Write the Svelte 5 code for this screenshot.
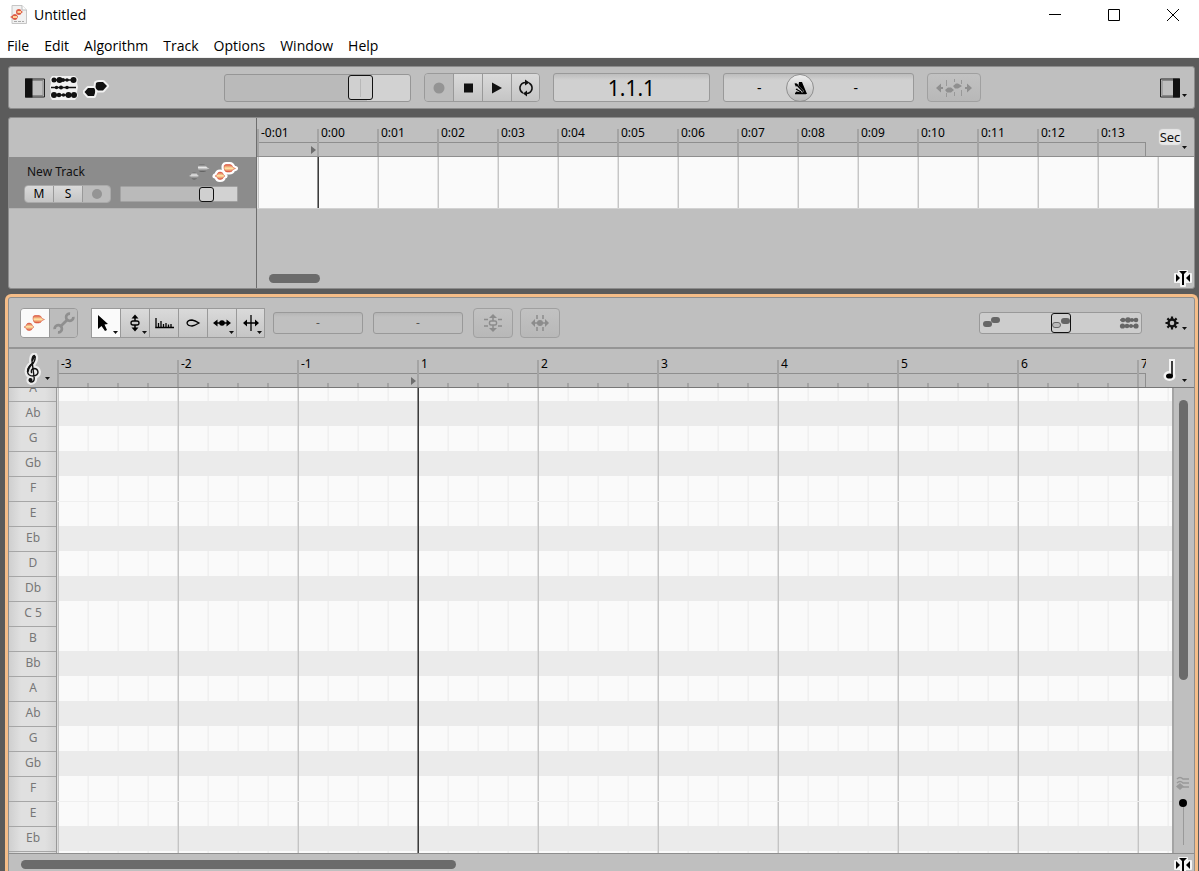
<script>
  const menus = ['File', 'Edit', 'Algorithm', 'Track', 'Options', 'Window', 'Help'];
  const seconds = ['-0:01', '0:00', '0:01', '0:02', '0:03', '0:04', '0:05', '0:06', '0:07', '0:08', '0:09', '0:10', '0:11', '0:12', '0:13'];
  const bars = ['-3', '-2', '-1', '1', '2', '3', '4', '5', '6', '7'];
  const keys = ['A', 'Ab', 'G', 'Gb', 'F', 'E', 'Eb', 'D', 'Db', 'C 5', 'B', 'Bb', 'A', 'Ab', 'G', 'Gb', 'F', 'E', 'Eb', ''];
  let volume = $state(77);
  let trackVolume = $state(77);
  let blobView = $state(50);
  let blobHeight = $state(100);
</script>

{#snippet blobShape()}
  <path d="M1 15 3 14Q3.500 11 6 11Q9 11 9.500 14L11 15 9.500 16Q9 18.500 6 18.500Q3.500 18.500 3 16Z" />
  <path d="M10 7Q9.500 3.500 12 3.500H16Q18 3.500 19 6.500L21.500 7.500 19 8.500Q18 11 15.500 11H13Q10.500 11 10 7Z" />
{/snippet}

{#snippet blobs(cls)}
  <svg class="blobs {cls}" width="24" height="22" viewBox="0 0 24 22" aria-hidden="true">
    <g class="halo">{@render blobShape()}</g>
    <g class="shape">{@render blobShape()}</g>
  </svg>
{/snippet}

{#snippet fit()}
  <svg width="18" height="18" viewBox="0 0 18 18" aria-hidden="true">
    <path d="M5 2H13V5H17V13H11V17H7V13H1V5H5Z" fill="#f4f4f4" stroke="#f4f4f4" stroke-width="2" stroke-linejoin="round" />
    <path d="M5 2H13L10 5V16H8V5ZM2 5 6 9 2 13ZM16 5V13L12 9Z" fill="#000" />
  </svg>
{/snippet}

{#snippet caret()}
  <svg class="caret" width="6" height="4" viewBox="0 0 6 4" aria-hidden="true"><path d="M0 0H5L2.500 3Z" fill="#111" /></svg>
{/snippet}

<div class="window">
  <header class="titlebar">
    <svg width="20" height="20" viewBox="0 0 20 20" aria-hidden="true">
      <defs>
        <linearGradient id="warm" x1="0" y1="0" x2="0" y2="1">
          <stop offset="0" stop-color="#dd5540" /><stop offset=".5" stop-color="#ffeaa8" /><stop offset="1" stop-color="#dd5540" />
        </linearGradient>
        <linearGradient id="cool" x1="0" y1="0" x2="0" y2="1">
          <stop offset="0" stop-color="#666" /><stop offset=".4" stop-color="#e6e6e6" /><stop offset="1" stop-color="#555" />
        </linearGradient>
      </defs>
      <path d="M3 .5H13L17.500 5V18.500H3Z" fill="#f1f1f1" stroke="#c6c6c6" />
      <path d="M13 .5V5H17.500" fill="#fff" stroke="#bbb" />
      <path d="M1 12 3 11Q4 9 6 9Q8 9 9 11.500Q8 15 6 15Q4 15 3 13Z" fill="#dd5b45" />
      <path d="M7 7Q7 4 10 4Q12 4 12.500 6L14 7 12.500 8Q12 10 10 10Q7 10 7 7Z" fill="#dd5b45" />
      <path d="M4 12H8M8.500 7H12" stroke="#ffd29b" stroke-width="2" />
      <path d="M5 16.500H15" stroke="#aaa" stroke-dasharray="3 1" />
    </svg>
    <span class="title">Untitled</span>
    <div class="winbtns">
      <button aria-label="Minimize"><svg width="14" height="14" viewBox="0 0 14 14"><path d="M1 6.500H13" stroke="#000" /></svg></button>
      <button aria-label="Maximize"><svg width="14" height="14" viewBox="0 0 14 14"><path d="M1.500 1.500H12.500V12.500H1.500Z" fill="none" stroke="#000" /></svg></button>
      <button aria-label="Close"><svg width="14" height="14" viewBox="0 0 14 14"><path d="M1 1 13 13M13 1 1 13" stroke="#000" /></svg></button>
    </div>
  </header>
  <nav class="menubar">
    {#each menus as m}<button>{m}</button>{/each}
  </nav>

  <section class="panel transport">
    <div class="side">
      <button aria-label="Info pane"><svg width="20" height="20" viewBox="0 0 20 20"><path d="M.5 1H19.500V19H.5Z" fill="#bfbfbf" stroke="#222" /><path d="M2 2.500H18V17.500H2Z" fill="none" stroke="#888" /><path d="M0 .5H7.500V19.500H0Z" fill="#111" /></svg></button>
      <button aria-label="Tracks">
        <svg width="30" height="28" viewBox="0 0 30 28">
          <path d="M3 2H26L29 5 28 9 29 13 28 18 29 22 26 26H3L1 22 2 18 1 13 2 9 1 5Z" fill="#f2f2f2" />
          <path d="M3 6H27M2 13.500H27M3 21H27" stroke="#111" stroke-width="1.500" />
          <g fill="#111">
            <circle cx="5" cy="6" r="2.500" /><circle cx="10.500" cy="6" r="3" /><circle cx="14" cy="6" r="2" /><circle cx="18" cy="6" r="1.800" /><circle cx="24.500" cy="6" r="3" />
            <circle cx="7.500" cy="13.500" r="1.700" /><circle cx="12" cy="13.500" r="2" /><circle cx="18" cy="13.500" r="1.800" />
            <circle cx="5" cy="21" r="3" /><circle cx="10" cy="21" r="2.300" /><circle cx="14.500" cy="21" r="1.800" /><circle cx="19.500" cy="21" r="3" /><circle cx="25" cy="21" r="3" />
          </g>
        </svg>
      </button>
      <button aria-label="Notes">
        <svg width="28" height="24" viewBox="0 0 28 24">
          <path d="M1.500 16 5 12H11Q12.500 13 12 17L11 20H5ZM12.500 11 13 7Q14 6 16 6H20L24 10 20 14.500H15Q13 14 12.500 11Z" fill="#f2f2f2" stroke="#f2f2f2" stroke-width="4" stroke-linejoin="round" />
          <path d="M1.500 16 5 12H11Q12.500 13 12 17L11 20H5ZM12.500 11 13 7Q14 6 16 6H20L24 10 20 14.500H15Q13 14 12.500 11Z" fill="#111" />
        </svg>
      </button>
    </div>

    <div class="center">
      <input class="slider volume" type="range" min="0" max="100" bind:value={volume} style:--v="{volume}%" aria-label="Volume" />
      <div class="group">
        <button class="off" aria-label="Record"><svg width="14" height="14"><circle cx="7" cy="7" r="5.500" fill="#949494" /></svg></button>
        <button aria-label="Stop"><svg width="14" height="14"><path d="M3 2.500H12V11.500H3Z" fill="#111" /></svg></button>
        <button aria-label="Play"><svg width="14" height="14"><path d="M2 1.500 12 7 2 12.500Z" fill="#111" /></svg></button>
        <button aria-label="Cycle">
          <svg width="16" height="18" viewBox="0 0 16 18"><path d="M5 14Q1.500 12 2 8Q3 3.500 8 3.500M11 4Q14.500 6 14 10Q13 14.500 8 14.500" fill="none" stroke="#111" stroke-width="1.600" /><path d="M7 .5 11.500 3.500 7 6.500ZM9 11.500V17.500L5 14.500Z" fill="#111" /></svg>
        </button>
      </div>
      <output class="lcd position">1.1.1</output>
      <div class="lcd tempo">
        <span>-</span>
        <button class="metro" aria-label="Metronome"><svg width="18" height="18" viewBox="0 0 18 18"><path d="M8 3H11L16 15H4L7 9Z" fill="#000" /><path d="M3 4 12 13M5 11 9 12" stroke="#d5d5d5" stroke-width="2.500" /><path d="M4.500 4.500 12 12.500M5 10 10 13M4 14.500H15" stroke="#000" stroke-width="1.300" /><path d="M3.500 4.500 7 5 5 8Z" fill="#000" /></svg></button>
        <span>-</span>
      </div>
      <button class="flat wide" aria-label="Auto stretch">
        <svg width="36" height="20" viewBox="0 0 36 20"><g fill="#8f8f8f"><path d="M0 10 5 5.500V9H7V11H5V14.500ZM36 10 31 5.500V9H29V11H31V14.500Z" /><path d="M9 12 12 9.500H15L18 12 15 14.500H11ZM17 8 20 5.500H22L26 8 22 10.500H19Z" /></g><path d="M10.500 2V8M10.500 15V19M18.500 1V4M18.500 14V18M25.500 2V6M25.500 12V18" stroke="#999" /></svg>
      </button>
    </div>

    <div class="side end">
      <button class="withcaret" aria-label="Browser pane"><svg width="20" height="20" viewBox="0 0 20 20"><path d="M.5 1H19.500V19H.5Z" fill="#bfbfbf" stroke="#222" /><path d="M2 2.500H18V17.500H2Z" fill="none" stroke="#888" /><path d="M13 .5H20V19.500H13Z" fill="#111" /></svg>{@render caret()}</button>
    </div>
  </section>

  <section class="panel tracks">
    <div class="headers">
      <div class="track">
        <div class="line">
          <span class="name">New Track</span>
          <button aria-label="Show reference">{@render blobs('cool')}</button>
          <button aria-label="Edit track">{@render blobs('warm lit')}</button>
        </div>
        <div class="line">
          <div class="group mini">
            <button>M</button><button>S</button><button class="off" aria-label="Arm"><svg width="12" height="12"><circle cx="6" cy="6" r="5" fill="#949494" /></svg></button>
          </div>
          <input class="slider small" type="range" min="0" max="100" bind:value={trackVolume} style:--v="{trackVolume}%" aria-label="Track volume" />
        </div>
      </div>
    </div>
    <div class="timeline">
      <div class="rulerrow">
        <div class="ruler sec">
          {#each seconds as s, i}
            <div class="tick">{s}{#if i === 0}<svg class="mark" width="5" height="8"><path d="M0 0 5 4 0 8Z" fill="#6e6e6e" /></svg>{/if}</div>
          {/each}
        </div>
        <button class="unit"><span>Sec</span>{@render caret()}</button>
      </div>
      <div class="lane"></div>
      <div class="foot">
        <div class="thumb"></div>
        <button aria-label="Zoom to fit">{@render fit()}</button>
      </div>
    </div>
  </section>

  <section class="editor">
    <div class="tools">
      <div class="group tall">
        <button class="on" aria-label="Notes">{@render blobs('warm')}</button>
        <button class="off" aria-label="Note assignment"><svg width="22" height="22" viewBox="0 0 20 20"><path d="M7 13 13 7" stroke="#8f8f8f" stroke-width="2.500" /><path d="M15.500 1.500A3.300 3.300 0 1 0 18.500 4.500M4.500 18.500A3.300 3.300 0 1 0 1.500 15.500" fill="none" stroke="#8f8f8f" stroke-width="2.500" /></svg></button>
      </div>
      <div class="group tall square">
        <button class="on" aria-label="Main tool"><svg width="20" height="22" viewBox="2 0 20 22"><path d="M4 3V17L7.500 14 11 19 13 18 10.500 12.500 14 12Z" fill="#000" /></svg>{@render caret()}</button>
        <button aria-label="Pitch tool"><svg width="20" height="22" viewBox="0 0 20 22"><path d="M10 2.500 13.500 6.500H6.500ZM10 19.500 13.500 15.500H6.500Z" /><path d="M10 5V17" stroke="#000" stroke-width="1.500" /><rect x="6" y="9" width="8" height="4" rx="2" fill="#c8c8c8" stroke="#000" stroke-width="1.300" /></svg>{@render caret()}</button>
        <button aria-label="Formant tool"><svg width="20" height="16" viewBox="0 0 20 16"><path d="M2 3V13M4.500 8V13M7 6V13M9.500 9V13M12 8V13M14.500 9.500V13M17 9V13M1.200 12.500H20" stroke="#000" stroke-width="1.300" /></svg></button>
        <button aria-label="Amplitude tool"><svg width="16" height="10" viewBox="0 0 16 10"><path d="M2 5Q2.500 2 7 2Q10 2.500 14 5Q10 7.500 7 8Q2.500 8 2 5Z" fill="none" stroke="#000" stroke-width="1.300" /></svg></button>
        <button aria-label="Timing tool"><svg width="20" height="12" viewBox="0 0 20 12"><path d="M1 6 5.500 2.500V9.500ZM19 6 14.500 2.500V9.500Z" /><path d="M3 6H17" stroke="#000" stroke-width="1.500" /><circle cx="10" cy="6" r="2.800" /></svg>{@render caret()}</button>
        <button aria-label="Separation tool"><svg width="20" height="20" viewBox="0 0 20 20"><path d="M2 10 6 6.500V13.500ZM18 10 14 6.500V13.500Z" /><path d="M3 10H17M10 2V18" stroke="#000" stroke-width="1.300" /></svg>{@render caret()}</button>
      </div>
      <div class="fields">
        <button class="field">-</button>
        <button class="field">-</button>
      </div>
      <div class="macros">
        <button class="flat" aria-label="Correct pitch"><svg width="20" height="20" viewBox="0 0 20 20"><g fill="#8c8c8c"><path d="M10 1 14 5H6ZM10 19 14 15H6Z" /></g><path d="M10 4V16M1 6.500H5M15 6.500H19M1 13H5M15 13H19" stroke="#8c8c8c" stroke-width="1.500" /><rect x="6.500" y="8" width="7" height="4" rx="1.500" fill="#c0c0c0" stroke="#8c8c8c" stroke-width="1.500" /></svg></button>
        <button class="flat" aria-label="Quantize time"><svg width="20" height="20" viewBox="0 0 20 20"><g fill="#8c8c8c"><path d="M1 10 5 6V14ZM19 10 15 6V14Z" /><circle cx="10" cy="10" r="3" /></g><path d="M3 10H17M7 2V6M13 2V6M7 14V18M13 14V18" stroke="#8c8c8c" stroke-width="1.500" /></svg></button>
      </div>
      <div class="right">
        <div class="viewbox">
          <svg class="deco first" width="22" height="14" viewBox="0 0 22 14" aria-hidden="true"><rect x="1" y="5" width="9" height="6" rx="3" fill="#666" /><rect x="9" y="1" width="9" height="6" rx="3" fill="#666" /></svg>
          <svg class="deco second" width="20" height="14" viewBox="0 0 20 14" aria-hidden="true"><path d="M1 4H19M1 10H19" stroke="#666" stroke-width="1.500" /><g fill="#666"><circle cx="4" cy="4" r="2.300" /><circle cx="9" cy="4" r="2.800" /><circle cx="13" cy="4" r="2" /><circle cx="17" cy="4" r="2.300" /><circle cx="3.500" cy="10" r="2.600" /><circle cx="8" cy="10" r="2.300" /><circle cx="12" cy="10" r="2" /><circle cx="17" cy="10" r="2.600" /></g></svg>
          <input class="slider view" type="range" min="0" max="100" bind:value={blobView} aria-label="Blob and waveform size" />
        </div>
        <button class="withcaret gear" aria-label="Settings"><svg width="16" height="16" viewBox="0 0 16 16"><circle cx="8" cy="8" r="3.500" fill="none" stroke="#111" stroke-width="2.400" /><path d="M8 1.500V4M8 12V14.500M1.500 8H4M12 8H14.500M3.400 3.400 5.200 5.200M10.800 10.800 12.600 12.600M12.600 3.400 10.800 5.200M5.200 10.800 3.400 12.600" stroke="#111" stroke-width="2.200" /></svg>{@render caret()}</button>
      </div>
    </div>

    <div class="rulerrow beats">
      <button class="clef" aria-label="Scale">
        <svg width="18" height="32" viewBox="0 0 18 32"><g fill="none" stroke-linecap="round" stroke-linejoin="round"><path d="M6 26Q4.500 28 7 29Q10.500 29 10.200 25L8 8Q8 3 10.500 2.500Q12 5 10 9Q3.500 14 3.500 18.500Q4 23 9 23Q14 22.500 14 19Q13.500 15.500 10 15.500Q6.500 16 7.500 19.500" stroke="#ececec" stroke-width="6" /><path d="M6 26Q4.500 28 7 29Q10.500 29 10.200 25L8 8Q8 3 10.500 2.500Q12 5 10 9Q3.500 14 3.500 18.500Q4 23 9 23Q14 22.500 14 19Q13.500 15.500 10 15.500Q6.500 16 7.500 19.500" stroke="#111" stroke-width="1.400" /><path d="M8.500 7Q9.500 4 10.800 4M9 10Q4 14.500 4 18" stroke="#111" stroke-width="2" /></g><circle cx="6.500" cy="27" r="2" fill="#111" /></svg>
        {@render caret()}
      </button>
      <div class="ruler beat">
        {#each bars as b}
          <div class="tick">{b}{#if b === '-1'}<svg class="mark" width="5" height="8"><path d="M0 0 5 4 0 8Z" fill="#6e6e6e" /></svg>{/if}</div>
        {/each}
      </div>
      <button class="noteval" aria-label="Grid note value">
        <svg width="14" height="26" viewBox="0 0 14 26"><path d="M9 2V20" stroke="#f4f4f4" stroke-width="6" /><ellipse cx="6.500" cy="19" rx="6" ry="5" fill="#f4f4f4" /><path d="M9 4V19" stroke="#000" stroke-width="1.500" /><ellipse cx="6.500" cy="19" rx="3.500" ry="2.600" /></svg>
        {@render caret()}
      </button>
    </div>

    <div class="roll">
      <div class="clip keys"><div class="shift">{#each keys as k}<div class="key">{k}</div>{/each}</div></div>
      <div class="clip grid">
        <div class="shift">{#each keys as k}<div class="row" class:dark={k.endsWith('b')} class:split={k === 'E'}></div>{/each}</div>
      </div>
      <div class="rail">
        <div class="thumb vertical"></div>
        <div class="height">
          <svg width="14" height="14" viewBox="0 0 14 14" aria-hidden="true"><path d="M1 3Q4 0 7 3H13M1 7Q4 4 7 7H13M7 11H13" fill="none" stroke="#999" stroke-width="1.500" /><path d="M0 10.500 4 7 8 10.500 4 14Z" fill="#999" /></svg>
          <input class="vslider" type="range" min="0" max="100" bind:value={blobHeight} aria-label="Blob height" />
        </div>
      </div>
    </div>
    <div class="foot bottom">
      <div class="thumb long"></div>
      <button aria-label="Zoom to fit">{@render fit()}</button>
    </div>
  </section>
</div>

<style>
  :global(body) { margin: 0; overflow: hidden; }
  * { box-sizing: border-box; }
  .window { height: 100vh; display: flex; flex-direction: column; background: #5b5b5b; font: 12px/16px "Noto Sans", sans-serif; color: #111; overflow: hidden; }
  button { border: 0; padding: 0; margin: 0; background: none; font: inherit; color: inherit; display: flex; align-items: center; justify-content: center; }
  svg { display: block; flex: none; }
  .titlebar { display: flex; align-items: center; height: 30px; padding-left: 9px; background: #fff; font: 14px/20px "Open Sans", sans-serif; flex: none; }
  .title { margin-left: 5px; color: #000; }
  .winbtns { margin-left: auto; display: flex; gap: 7px; }
  .winbtns button { width: 52px; height: 28px; }
  .menubar { display: flex; gap: 15px; height: 28px; padding: 4px 7px 0; background: #fff; font: 14px/20px "Open Sans", sans-serif; color: #000; border-bottom: 1px solid #f0f0f0; flex: none; }
  .panel { margin: 8px 4px 0 8px; border: 1px solid #8c8c8c; border-radius: 3px; background: #bfbfbf; flex: none; }
  .transport { display: grid; grid-template-columns: 1fr auto 1fr; align-items: center; height: 43px; padding-left: 2px; }
  .side { display: flex; align-items: center; gap: 4px; padding-left: 14px; }
  .side.end { justify-content: flex-end; padding: 0 6px 0 0; }
  .center { display: flex; align-items: center; gap: 13px; }
  .withcaret { align-items: flex-end; }
  .end .withcaret .caret { margin-left: 2px; }

  .slider { appearance: none; margin: 0; border: 1px solid #969696; border-radius: 3px; background: linear-gradient(to right, #bababa var(--v), #d2d2d2 var(--v)); }
  .slider::-webkit-slider-thumb { appearance: none; border: 1px solid #111; border-radius: 3px; background: #d0d0d0; }
  .volume { width: 187px; height: 28px; }
  .volume::-webkit-slider-thumb { width: 25px; height: 25px; background: linear-gradient(#b8b8b8, #b8b8b8) center / 1px 18px no-repeat, #d0d0d0; }
  .small { width: 118px; height: 16px; border-color: #a2a2a2; border-radius: 1px; }
  .small::-webkit-slider-thumb { width: 15px; height: 15px; }

  .group { display: flex; border: 1px solid #9a9a9a; border-radius: 4px; overflow: hidden; }
  .group button { width: 29px; height: 27px; background: linear-gradient(#dadada, #c5c5c5); }
  .group button + button { border-left: 1px solid #999; }
  .group button:first-child, .group button:last-child { width: 28px; }
  .group button.off { background: #bcbcbc; }
  .group button.on { background: #fafafa; }
  .lcd { display: flex; align-items: center; justify-content: center; height: 29px; border: 1px solid #999; border-radius: 3px; background: linear-gradient(#bdbdbd, #d0d0d0 6px); color: #000; }
  .position { width: 157px; font-size: 21px; }
  .tempo { width: 191px; padding-left: 33px; justify-content: flex-start; font-size: 14px; }
  .metro { width: 28px; height: 28px; margin: 0 40px 0 24px; border: 1px solid #8f8f8f; border-radius: 50%; background: linear-gradient(#eee, #b8b8b8); }
  .flat { width: 40px; height: 30px; border: 1px solid #a0a0a0; border-radius: 4px; background: linear-gradient(#c2c2c2, #b8b8b8); }
  .wide { width: 54px; height: 29px; }

  .tracks { display: flex; height: 172px; }
  .headers { width: 248px; border-right: 1px solid #6e6e6e; padding-top: 39px; flex: none; }
  .track { height: 52px; padding: 4px 18px 0 15px; background: #8c8c8c; border-bottom: 1px solid #b3b3b3; }
  .line { display: flex; align-items: center; height: 22px; }
  .name { margin: 0 auto 0 3px; }
  .line button + button { margin-left: 2px; }
  .mini { border-color: #aaa; }
  .mini button { height: 16px; font-size: 12px; color: #000; }
  .group.mini button + button { margin-left: 0; }
  .line .slider { margin-left: auto; }
  .halo { display: none; }
  .cool .shape { fill: url(#cool); }
  .warm .shape { fill: url(#warm); stroke: #d3452f; stroke-width: .5; }
  .lit .halo { display: block; fill: #fff; stroke: #fff; stroke-width: 5; stroke-linejoin: round; }
  .lit { overflow: visible; }

  .timeline { flex: 1; min-width: 0; display: flex; flex-direction: column; }
  .rulerrow { display: flex; height: 39px; border-bottom: 1px solid #8e8e8e; flex: none; }
  .ruler { flex: 1; min-width: 0; overflow: hidden; display: flex; align-items: flex-end; background: linear-gradient(#8e8e8e, #8e8e8e) 0 24px / 100% 1px no-repeat, linear-gradient(#8e8e8e, #8e8e8e) 100% 100% / 1px 14px no-repeat; }
  .tick { flex: none; width: 60px; height: 27px; border-left: 2px solid #a4a4a4; padding-left: 2px; font-size: 12px; line-height: 8px; color: #000; }
  .mark { margin: 9px 0 0 50px; }
  .unit { width: 48px; flex-direction: column; padding: 12px 0 0; justify-content: flex-start; font-size: 13px; line-height: 14px; }
  .unit span { background: #e8e8e8; border-radius: 3px; box-shadow: 0 0 1px 1px #e8e8e8; }
  .unit .caret { margin: 2px 0 0 30px; }
  .lane { height: 52px; flex: none; border-bottom: 1px solid #d2d2d2; background: linear-gradient(to right, #8c8c8c 50%, #3c3c3c 50%) 60px 0 / 2px 100% no-repeat, repeating-linear-gradient(to right, #e2e2e2 0 1px, #c6c6c6 1px 2px, #fafafa 2px 60px); }
  .foot { margin-top: auto; display: flex; align-items: center; justify-content: space-between; height: 20px; padding: 0 2px 0 12px; }
  .thumb { width: 51px; height: 9px; border-radius: 5px; background: #6b6b6b; }

  .editor { flex: 1; min-height: 0; margin: 5px 1px 0 5px; border: 3px solid #f5bd88; border-bottom: 0; border-radius: 6px 6px 0 0; background: #bfbfbf; display: flex; flex-direction: column; box-shadow: inset 0 1px 0 #8e8e8e, inset 1px 0 0 #8e8e8e, inset -1px 0 0 #8e8e8e; padding: 1px 1px 0; }
  .tools { display: flex; align-items: center; height: 51px; padding: 1px 0 0 11px; border-bottom: 2px solid #959595; flex: none; }
  .tall { height: 30px; }
  .tall button { height: 28px; }
  .square { margin-left: 13px; border-radius: 0; }
  .square button { position: relative; }
  .square .caret { position: absolute; right: 1px; bottom: 2px; }
  .fields { display: flex; gap: 10px; margin-left: 8px; }
  .field { width: 90px; height: 22px; border: 1px solid #999; border-radius: 3px; background: linear-gradient(#b5b5b5, #c0c0c0 4px); color: #555; }
  .macros { display: flex; gap: 7px; margin-left: 10px; }
  .right { margin-left: auto; display: flex; align-items: center; padding-right: 6px; gap: 22px; }
  .viewbox { display: grid; grid-template-columns: 1fr auto; align-items: center; width: 163px; height: 22px; border: 1px solid #999; border-radius: 3px; background: #cdcdcd; }
  .deco { grid-row: 1; margin: 0 2px; }
  .first { grid-column: 1; }
  .second { grid-column: 2; }
  .view { grid-row: 1; grid-column: 1 / 3; width: 100%; height: 20px; border: 0; background: none; }
  .view::-webkit-slider-thumb { width: 20px; height: 20px; background: url("data:image/svg+xml,%3Csvg xmlns='http://www.w3.org/2000/svg' width='18' height='18'%3E%3Crect x='.5' y='8.500' width='8' height='5' rx='2.500' fill='%23bbb' stroke='%23666'/%3E%3Crect x='9' y='4' width='9' height='6' rx='3' fill='%23666'/%3E%3C/svg%3E") center no-repeat, #cfcfcf; }
  .gear .caret { margin-left: 2px; }

  .beats { border-bottom-color: #777; }
  .clef { width: 48px; padding: 3px 0 2px 9px; align-items: flex-end; }
  .clef .caret { margin: 0 0 4px 3px; }
  .beat { background: linear-gradient(#8e8e8e, #8e8e8e) 0 24px / 100% 1px no-repeat, linear-gradient(#8e8e8e, #8e8e8e) 100% 100% / 1px 14px no-repeat, repeating-linear-gradient(to right, #a4a4a4 0 2px, transparent 2px 30px) 0 100% / 100% 4px no-repeat; }
  .beat .tick { width: 120px; }
  .beat .mark { margin-left: 110px; }
  .noteval { width: 48px; align-items: flex-end; padding: 0 0 4px 10px; }
  .noteval .caret { margin-left: 5px; }

  .roll { flex: 1; min-height: 0; display: flex; }
  .clip { overflow: hidden; }
  .shift { margin-top: -12px; }
  .keys { width: 48px; border-right: 1px solid #999; background: linear-gradient(to right, #cfcfcf, #e0e0e0 12px 36px, #d4d4d4); flex: none; }
  .key { height: 25px; border-top: 1px solid #a6a6a6; padding-left: 1px; text-align: center; line-height: 22px; color: #777; }
  .grid { display: grid; flex: 1; min-width: 0; }
  .grid .shift { grid-area: 1 / 1; }
  .row { height: 25px; background: repeating-linear-gradient(to right, #e0e0e0 0 1px, #c4c4c4 1px 2px, transparent 2px 120px), repeating-linear-gradient(to right, #f4f4f4 0 1px, #f0f0f0 1px 2px, transparent 2px 30px), #fafafa; }
  .row.dark { background: repeating-linear-gradient(to right, #dcdcdc 0 1px, #c4c4c4 1px 2px, transparent 2px 120px), #ebebeb; }
  .row.split { border-top: 1px solid #efefef; }
  .grid::after { content: ""; grid-area: 1 / 1; width: 2px; margin-left: 360px; background: linear-gradient(to right, #8c8c8c 50%, #3c3c3c 50%); z-index: 1; }
  .rail { width: 22px; border-left: 2px solid #a4a4a4; display: flex; flex-direction: column; align-items: center; justify-content: space-between; padding: 12px 2px 8px 0; flex: none; }
  .vertical { width: 9px; height: 280px; }
  .height { display: flex; flex-direction: column; align-items: center; gap: 9px; }
  .vslider { appearance: none; writing-mode: vertical-lr; direction: rtl; width: 14px; height: 46px; margin: 0; background: linear-gradient(#999, #999) center / 1px 100% no-repeat; }
  .vslider::-webkit-slider-thumb { appearance: none; width: 8px; height: 8px; border-radius: 50%; background: #000; }
  .bottom { height: 18px; border-top: 1px solid #8e8e8e; margin: 0; padding: 4px 2px 0 12px; flex: none; }
  .long { width: 435px; }
</style>
